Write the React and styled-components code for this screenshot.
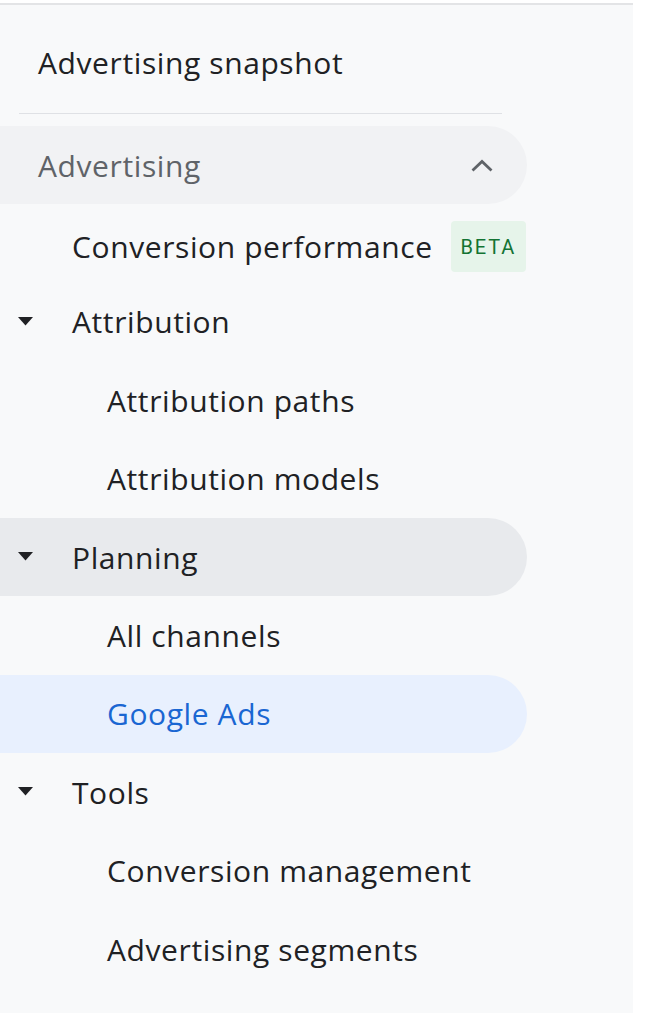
import React from 'react';
import styled, { createGlobalStyle } from 'styled-components';

const GlobalStyle = createGlobalStyle`
  html, body {
    margin: 0;
    padding: 0;
    background: #ffffff;
  }
  body {
    font-family: "Open Sans", Roboto, Arial, sans-serif;
    -webkit-font-smoothing: antialiased;
  }
`;

const Sidebar = styled.nav`
  box-sizing: border-box;
  width: 633px;
  height: 1010px;
  margin-top: 3px;
  padding-top: 18px;
  background: #f8f9fa;
  border-top: 2px solid #e3e4e6;
`;

const ROW = 78.4;

const TopItem = styled.div`
  height: 78px;
  display: flex;
  align-items: center;
  padding-left: 38px;
  font-size: 30px;
  letter-spacing: 0.6px;
  color: #202124;
`;

const Divider = styled.hr`
  border: 0;
  height: 1px;
  background: #dfe1e5;
  margin: 12px 0 12px 19px;
  width: 483px;
`;

const Row = styled.div`
  box-sizing: border-box;
  height: ${ROW}px;
  width: 527px;
  display: flex;
  align-items: center;
  padding-left: ${(p) => p.$indent}px;
  padding-right: 34px;
  padding-top: ${(p) => p.$shift || 0}px;
  border-radius: 0 40px 40px 0;
  background: ${(p) => p.$bg || 'transparent'};
  color: ${(p) => p.$color || '#202124'};
  font-size: 30px;
  letter-spacing: 0.6px;
  position: relative;
`;

const Label = styled.span`
  flex: 1;
  white-space: nowrap;
`;

const Caret = styled.svg`
  position: absolute;
  left: 18px;
  top: 50%;
  margin-top: -5px;
  width: 15px;
  height: 9px;
`;

const Chevron = styled.svg`
  width: 22px;
  height: 13px;
`;

const Badge = styled.span`
  box-sizing: border-box;
  height: 51px;
  padding: 0 10px;
  display: flex;
  align-items: center;
  background: #e6f4ea;
  color: #137333;
  font-family: Roboto, Arial, sans-serif;
  font-size: 20px;
  letter-spacing: 1.8px;
  border-radius: 4px;
  margin-right: -33px;
`;

const DownCaret = () => (
  <Caret viewBox="0 0 15 9">
    <path d="M0 0 H15 L7.5 8.5 Z" fill="#202124" />
  </Caret>
);

const UpChevron = () => (
  <Chevron viewBox="0 0 22 13">
    <path d="M1.5 11.5 L11 2.5 L20.5 11.5" fill="none" stroke="#5f6368" strokeWidth="2.8" />
  </Chevron>
);

const items = [
  { label: 'Conversion performance', indent: 72, badge: 'BETA', shift: 6 },
  { label: 'Attribution', indent: 72, caret: true },
  { label: 'Attribution paths', indent: 107 },
  { label: 'Attribution models', indent: 107 },
  { label: 'Planning', indent: 72, caret: true, bg: '#e8eaed' },
  { label: 'All channels', indent: 107 },
  { label: 'Google Ads', indent: 107, bg: '#e8f0fe', color: '#1a66d2' },
  { label: 'Tools', indent: 72, caret: true },
  { label: 'Conversion management', indent: 107 },
  { label: 'Advertising segments', indent: 107 },
];

export default function App() {
  return (
    <>
      <GlobalStyle />
      <Sidebar>
        <TopItem>Advertising snapshot</TopItem>
        <Divider />
        <Row $indent={38} $bg="#f1f2f4" $color="#5f6368">
          <Label>Advertising</Label>
          <UpChevron />
        </Row>
        {items.map((it) => (
          <Row
            key={it.label}
            $indent={it.indent}
            $bg={it.bg}
            $color={it.color}
            $shift={it.shift}
          >
            {it.caret && <DownCaret />}
            <Label>{it.label}</Label>
            {it.badge && <Badge>{it.badge}</Badge>}
          </Row>
        ))}
      </Sidebar>
    </>
  );
}
